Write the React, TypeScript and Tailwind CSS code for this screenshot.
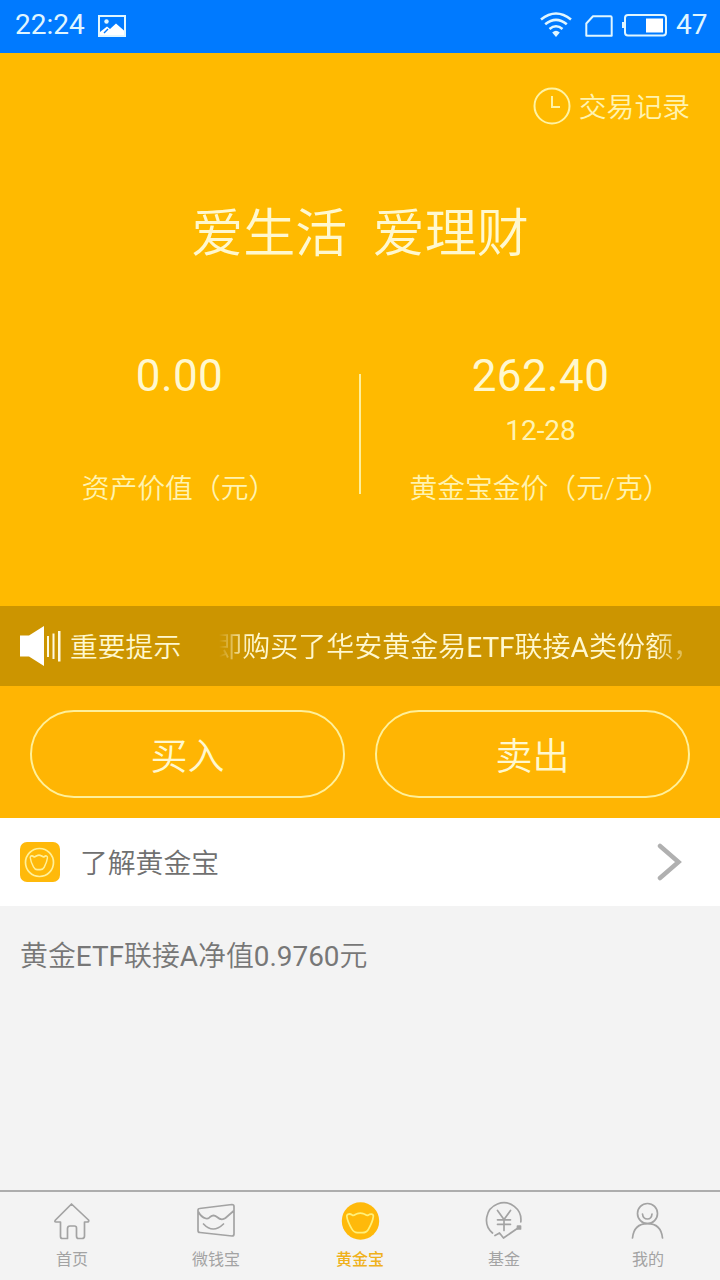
import type { ReactNode } from "react";

const ingot =
  "M-13.5 -5.5 C-13.5 -8 -10 -8 -8 -6.5 C-6 -5.5 -5 -7.5 -3 -8 C-1 -8.6 1 -8.6 3 -8 C5 -7.5 6 -5.5 8 -6.5 C10 -8 13.5 -8 13 -5 C12.5 -1 10.5 3 8 7 C6.5 9.5 5 10 2 10 H-3 C-5.5 10 -7 9 -8.5 6.5 C-11 2.5 -13 -1 -13.5 -5.5 Z";

function StatusBar() {
  return (
    <header className="flex h-[53px] items-center bg-[#007aff] pl-[15px] pr-[14px] font-normal text-[#e0f6ff]">
      <span className="w-[71px] text-[28px] leading-[48px] pb-[3px] whitespace-nowrap">22:24</span>
      <svg className="ml-[12px] mb-[2px]" width="28" height="22" viewBox="0 0 28 22" fill="none">
        <rect x="1" y="1" width="26" height="20" stroke="currentColor" strokeWidth="2" />
        <circle cx="8.5" cy="6.5" r="2.2" fill="currentColor" />
        <path d="M2 20 V17 L9 11.5 L12 14 L18 8.5 L26 15.5 V20 Z" fill="white" />
        <path d="M6 18 L10 14" stroke="#007aff" strokeWidth="1.5" />
      </svg>
      <svg className="ml-auto mb-[3px]" width="32" height="26" viewBox="0 0 32 26" fill="none" stroke="currentColor" strokeWidth="2.6">
        <path d="M1 7.5 Q16 -4.5 31 7.5" />
        <path d="M5.2 12.2 Q16 3.4 26.8 12.2" />
        <path d="M9.5 17 Q16 11.5 22.5 17" />
        <path d="M12.2 20.5 Q16 17 19.8 20.5 L16 25 Z" fill="currentColor" stroke="none" />
      </svg>
      <svg className="ml-[13px] mb-[1px]" width="28" height="22" viewBox="0 0 28 22" fill="none">
        <path d="M8 1.3 H25.5 Q26.7 1.3 26.7 2.5 V20.7 H1.3 V8.5 Z" stroke="currentColor" strokeWidth="2" strokeLinejoin="round" />
      </svg>
      <svg className="ml-[9px] mb-[3px]" width="46" height="24" viewBox="0 0 46 24" fill="none">
        <rect x="3" y="2" width="41" height="20.6" rx="3" stroke="currentColor" strokeWidth="2" />
        <path d="M1 9 V15" stroke="currentColor" strokeWidth="2" />
        <rect x="24" y="5.500" width="17" height="14" fill="white" />
      </svg>
      <span className="ml-[8px] w-[30px] text-[28px] leading-[48px] pb-[3px] whitespace-nowrap">47</span>
    </header>
  );
}

function Tab({ label, active, children }: { label: string; active?: boolean; children: ReactNode }) {
  return (
    <button className={active ? "flex flex-1 flex-col items-center pt-[9px] font-medium text-[#efb11c]" : "flex flex-1 flex-col items-center pt-[9px] font-normal text-[#a3a3a3]"}>
      <svg width="40" height="40" viewBox="0 0 40 40" fill="none" stroke="currentColor" strokeWidth="1.7" strokeLinecap="round" strokeLinejoin="round">
        {children}
      </svg>
      <span className="mt-[7px] text-[16px] leading-[24px]">{label}</span>
    </button>
  );
}

export default function App() {
  return (
    <div className="flex h-[1280px] w-[720px] flex-col overflow-hidden bg-[#f3f3f3] font-['Roboto','Noto_Sans_CJK_SC',sans-serif] font-[350]">
      <StatusBar />
      <section className="flex h-[553px] flex-col bg-[#ffba00] text-[#fff8cf]">
        <button className="mt-[32px] mr-[30px] flex h-[42px] items-center self-end">
          <svg width="38" height="38" viewBox="0 0 38 38" fill="none" stroke="#fff3a3" strokeWidth="2">
            <circle cx="19" cy="19" r="17.5" />
            <path d="M19 9 V20 H27" />
          </svg>
          <span className="ml-[8px] pt-[3px] text-[27.800px] leading-[42px] text-[#fff3b0]">交易记录</span>
        </button>
        <h1 className="mt-[70px] whitespace-pre text-center text-[52px] leading-[76px]">爱生活{"  "}爱理财</h1>
        <div className="mt-[48px] flex">
          <div className="flex w-[359px] flex-col items-center">
            <span className="mt-[29px] text-[44px] font-normal leading-[52px] tracking-[0.400px]">0.00</span>
            <span className="mt-[66px] mr-[1px] text-[27.800px] leading-[42px] text-[#fff3b0]">资产价值（元）</span>
          </div>
          <div className="mt-[53px] h-[120px] w-[2px] bg-[#fff09a]" />
          <div className="flex flex-1 flex-col items-center">
            <span className="mt-[29px] text-[44px] font-normal leading-[52px] tracking-[0.400px]">262.40</span>
            <span className="mt-[12px] text-[28px] font-normal leading-[34px] text-[#fff3b0]">12-28</span>
            <span className="mt-[20px] mr-[1px] text-[27.800px] leading-[42px] text-[#fff3b0]">黄金宝金价（元/克）</span>
          </div>
        </div>
      </section>
      <section className="flex h-[80px] items-center bg-[#cc9500] pl-[20px] text-[27.800px] text-[#fff8cf]">
        <svg width="41" height="40" viewBox="0 0 41 40" fill="white">
          <path d="M0 9.5 H9 L24 0 V40 L9 30.5 H0 Z" />
          <path d="M27 10 H29 V31 H27 Z M32.5 7.5 H34.5 V33 H32.5 Z M38 5 H40.5 V35.5 H38 Z" fill="#fffadf" />
        </svg>
        <span className="ml-[9px] pt-[4px] leading-[42px]">重要提示</span>
        <div className="ml-[33px] flex pt-[3px] text-[28px] whitespace-nowrap leading-[42px] [mask-image:linear-gradient(to_right,transparent_5px,black_34px,black_440px,transparent_486px)]">
          <span>即购买了华安黄金易<span className="font-normal">ETF</span>联接<span className="font-normal">A</span>类份额，</span>
        </div>
      </section>
      <section className="flex h-[132px] gap-[30px] bg-[#ffb503] px-[30px] pt-[24px] text-[37px] leading-[84px] text-[#fff8cf]">
        <button className="h-[88px] flex-1 rounded-full border-2 border-[#fff09a] pt-[4px]">买入</button>
        <button className="h-[88px] flex-1 rounded-full border-2 border-[#fff09a] pt-[4px]">卖出</button>
      </section>
      <button className="flex h-[88px] items-center bg-white pl-[20px] pr-[38px] text-[27.800px] text-[#707070]">
        <svg width="40" height="40" viewBox="0 0 40 40" fill="none" stroke="#fff09a">
          <rect width="40" height="40" rx="7" fill="#ffb90a" stroke="none" />
          <circle cx="19.500" cy="20.500" r="14" strokeWidth="1.7" />
          <path d={ingot} transform="translate(19 19.800) scale(.65 .78)" strokeWidth="2.2" />
        </svg>
        <span className="ml-[20px] pt-[4px] leading-[42px]">了解黄金宝</span>
        <svg className="ml-auto" width="25" height="38" viewBox="0 0 25 38" fill="none" stroke="#b0b0b0" strokeWidth="4.500">
          <path d="M3 3 L21.500 19 L3 35" strokeLinecap="round" />
        </svg>
      </button>
      <main className="flex-1 px-[20px] pt-[30px] text-[27.900px] leading-[42px] text-[#777]">
        黄金<span className="font-normal">ETF</span>联接<span className="font-normal">A</span>净值<span className="font-normal">0.9760</span>元
      </main>
      <nav className="flex h-[90px] border-t-2 border-[#adadad]">
        <Tab label="首页">
          <path d="M19.500 3 L36.500 19 Q37.500 21 35 21 H32.500 V35 Q32.500 37.500 30 37.500 H26.500 Q24.500 37.500 24.500 35 V27 Q24.500 25 22.500 25 H18 Q15.500 25 15.500 27.500 V37.500 H10.500 Q8.500 37.500 8.500 35.500 V21 H4 Q2 21 3.500 19 Z" />
        </Tab>
        <Tab label="微钱宝">
          <path d="M3.500 7.500 L36 3.500 Q38 3.500 38 5.500 V33 Q38 35 36 35 L4 31.500 Q2 31.500 2 29.500 V9.500 Q2 7.500 3.500 7.500 Z M2.500 11 Q5 16 10 17.500 Q12.500 18 14 16 Q17.500 13 21 16 Q25.500 20 29.500 17 L37.500 10 M7.500 23 Q17 33 27.500 23" />
        </Tab>
        <Tab label="黄金宝" active>
          <circle cx="20.500" cy="20" r="18.700" fill="#ffb90a" stroke="none" />
          <path d={ingot} transform="translate(20.300 21) scale(1 1.060)" stroke="#fff07a" />
        </Tab>
        <Tab label="基金">
          <path d="M8.500 32 A17.200 17.200 0 1 1 36.800 21 M13.500 9.500 L20 18.500 L26.500 9.500 M20 18.500 V29.500 M13.500 18.800 H26.500 M13.500 23.300 H26.500 M11 34.500 L15.500 32 L19.500 37 L34 27" />
          <path d="M33.500 25 H36.500 V28 H33.500 Z" fill="currentColor" />
        </Tab>
        <Tab label="我的">
          <circle cx="19.500" cy="12.500" r="10" />
          <path d="M14.500 13 Q15 18 19.500 18 Q23.500 18 24 13 M4.500 37 Q6 22.700 19.500 22.700 Q33 22.700 34.500 37" />
        </Tab>
      </nav>
    </div>
  );
}
